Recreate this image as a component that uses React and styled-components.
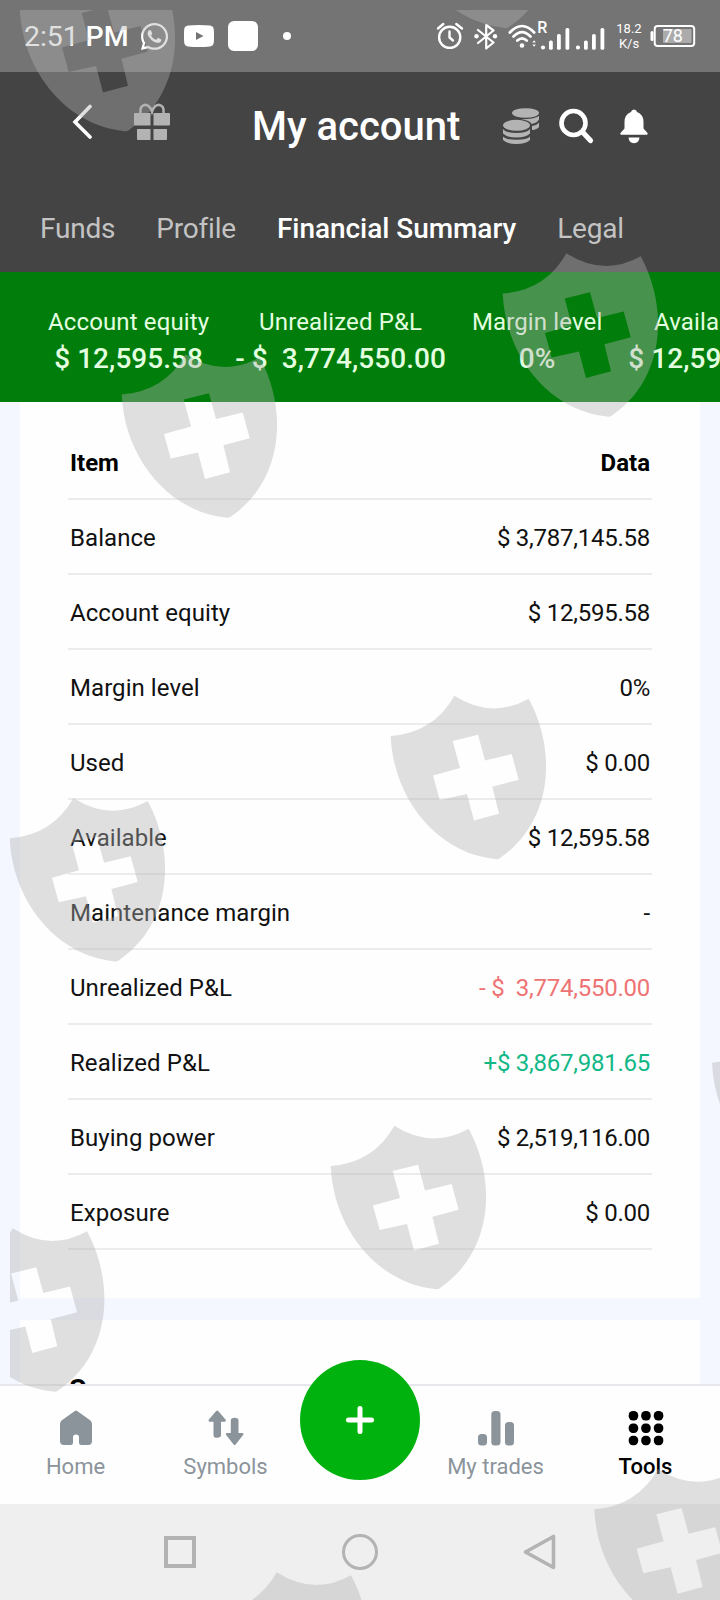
import * as React from 'react'
import styled, { createGlobalStyle } from 'styled-components'
import { FaWhatsapp } from 'react-icons/fa'

const GlobalStyle = createGlobalStyle`
  * {
    box-sizing: border-box;
  }
  body {
    margin: 0;
    background: #fdfdfd;
    font-family: Roboto, "Liberation Sans", sans-serif;
  }
`

const Screen = styled.div`
  position: relative;
  display: flex;
  flex-direction: column;
  width: 720px;
  height: 1600px;
  overflow: hidden;
`

const StatusBar = styled.div`
  display: flex;
  align-items: center;
  justify-content: space-between;
  height: 72px;
  padding: 0 24px 0 24px;
  background: #747474;
  color: #fff;
`

const StatusGroup = styled.div`
  display: flex;
  align-items: center;
`

const Clock = styled.span`
  width: 115px;
  padding-top: 2px;
  font-size: 28.5px;
  font-weight: 500;
  line-height: 34px;
  letter-spacing: -0.1px;
  white-space: nowrap;
`

const ClockDigits = styled.span`
  font-weight: 400;
`

const AppBadge = styled.span`
  width: 30px;
  height: 30px;
  margin-left: 14px;
  border-radius: 6px;
  background: #fff;
`

const Dot = styled.span`
  width: 8px;
  height: 8px;
  margin-left: 25px;
  border-radius: 50%;
  background: #fff;
`

const Speed = styled.span`
  display: flex;
  flex-direction: column;
  align-items: center;
  width: 26px;
  margin: 0 8px 0 11px;
  font-size: 13px;
  font-weight: 400;
  line-height: 15px;
`

const Header = styled.header`
  display: flex;
  flex-direction: column;
  height: 200px;
  background: #444;
`

const TitleRow = styled.div`
  display: flex;
  align-items: center;
  height: 108px;
  padding: 0 71px 0 72px;
`

const HeaderStart = styled.div`
  display: flex;
  align-items: center;
  padding-bottom: 8px;
`

const Title = styled.h1`
  flex: 1;
  margin: 0;
  padding: 2px 0 0 81px;
  color: #fff;
  font-size: 40px;
  font-weight: 500;
  line-height: 48px;
  white-space: nowrap;
`

const HeaderActions = styled.div`
  display: flex;
  align-items: center;
`

const Tabs = styled.nav`
  display: flex;
  align-items: center;
  gap: 41px;
  height: 92px;
  padding: 5px 0 0 40px;
`

const Tab = styled.span`
  color: ${({ $active }) => ($active ? '#fff' : '#c3c3c3')};
  font-size: 28px;
  font-weight: ${({ $active }) => ($active ? 500 : 400)};
  line-height: 34px;
  letter-spacing: ${({ $active }) => ($active ? '-0.05px' : '-0.2px')};
  white-space: nowrap;
`

const Strip = styled.section`
  display: flex;
  gap: 26px;
  height: 130px;
  padding: 32px 0 0 48px;
  overflow: hidden;
  background: #007d0a;
`

const Stat = styled.div`
  display: flex;
  flex: none;
  flex-direction: column;
  align-items: center;
  color: #e4ffe0;
  white-space: pre;
`

const StatLabel = styled.span`
  font-size: 24px;
  line-height: 36px;
  letter-spacing: 0.13px;
`

const StatValue = styled.span`
  font-size: 28px;
  font-weight: 500;
  line-height: 38px;
  letter-spacing: 0.05px;
`

const Content = styled.main`
  display: flex;
  flex: 1;
  flex-direction: column;
  gap: 22px;
  min-height: 0;
  padding: 0 20px;
  overflow: hidden;
  background: #f4f7ff;
`

const Card = styled.section`
  flex: none;
  height: ${({ $height }) => $height}px;
  padding: ${({ $top }) => $top}px 48px 0;
  background: #fefefe;
`

const Row = styled.div`
  display: flex;
  align-items: center;
  justify-content: space-between;
  height: 75px;
  padding: 2px 2px 0;
  border-bottom: 2px solid #ececec;
  color: ${({ $head }) => ($head ? '#000' : '#111')};
  font-size: 24px;
  font-weight: ${({ $head }) => ($head ? 700 : 400)};
  line-height: 30px;
  white-space: pre;
`

const Label = styled.span`
  letter-spacing: 0.06px;
`

const Amount = styled.span`
  color: ${({ $tone }) => ({ loss: '#ee7374', gain: '#12b886' })[$tone] || 'inherit'};
  letter-spacing: -0.25px;
`

const CardTitle = styled.h2`
  margin: 0;
  padding-left: 1px;
  color: #000;
  font-size: 28px;
  font-weight: 700;
  line-height: 34px;
`

const BottomNav = styled.nav`
  display: grid;
  grid-template-columns: 150px 150px 120px 150px 150px;
  height: 120px;
  border-top: 2px solid #e6e8ec;
  background: #fefefe;
`

const NavItem = styled.div`
  display: flex;
  flex-direction: column;
  align-items: center;
  padding: 24px 0 0 1px;
  color: ${({ $active }) => ($active ? '#000' : '#8b949b')};
  font-size: 22px;
  font-weight: ${({ $active }) => ($active ? 500 : 400)};
  line-height: 42px;
  white-space: nowrap;
`

const AddButton = styled.div`
  display: flex;
  align-items: center;
  justify-content: center;
  width: 120px;
  height: 120px;
  margin-top: -26px;
  border-radius: 50%;
  background: #00b20d;
`

const SystemBar = styled.div`
  display: flex;
  justify-content: center;
  gap: 144px;
  height: 96px;
  padding-top: 30px;
  background: #efefef;
`

const Overlay = styled.svg`
  position: absolute;
  inset: 0;
  pointer-events: none;
`

const Icon = styled.svg`
  flex: none;
  margin-left: ${({ $left = 0 }) => $left}px;
  fill: currentColor;
`

const HeaderIcon = styled(Icon)`
  color: ${({ $muted }) => ($muted ? '#b3b3b3' : '#fff')};
`

const stats = [
  { label: 'Account equity', value: '$ 12,595.58' },
  { label: 'Unrealized P&L', value: '- $  3,774,550.00' },
  { label: 'Margin level', value: '0%' },
  { label: 'Available', value: '$ 12,595.58' },
]

const rows = [
  { item: 'Balance', data: '$ 3,787,145.58' },
  { item: 'Account equity', data: '$ 12,595.58' },
  { item: 'Margin level', data: '0%' },
  { item: 'Used', data: '$ 0.00' },
  { item: 'Available', data: '$ 12,595.58' },
  { item: 'Maintenance margin', data: '-' },
  { item: 'Unrealized P&L', data: '- $  3,774,550.00', tone: 'loss' },
  { item: 'Realized P&L', data: '+$ 3,867,981.65', tone: 'gain' },
  { item: 'Buying power', data: '$ 2,519,116.00' },
  { item: 'Exposure', data: '$ 0.00' },
]

const shields = [
  [19.7, -32.3],
  [400, -135.5],
  [121.7, 354.3],
  [502.7, 253.3],
  [390.7, 695.7],
  [9.7, 798],
  [330.7, 1125.7],
  [-51, 1228.3],
  [712, 1022.4],
  [594.3, 1469],
  [213, 1572.3],
]

const SHIELD_PATH =
  'M0 40.3Q43 37 63.7 0Q101 23.8 138 3C164.7 51.7 164.7 124.3 109 162.5Q107 164 104 163.2C47.7 157.7 2.7 104.3 0 40.3Z' +
  'M62 45.3L69.3 72.3L42.3 79.7L49 104.3L76.3 98.3L83.3 124.7L108.3 118L101.7 91L128 84L121 58.3L94.3 64.7L87.3 39Z'

const Shields = () => (
  <Overlay width="720" height="1600" viewBox="0 0 720 1600">
    <clipPath id="shield-area">
      <rect x="10" y="10" width="710" height="1590" />
    </clipPath>
    <g clipPath="url(#shield-area)" fill="#b2b2b2" fillOpacity="0.4" fillRule="evenodd">
      {shields.map(([x, y]) => (
        <path key={`${x}-${y}`} d={SHIELD_PATH} transform={`translate(${x} ${y})`} />
      ))}
    </g>
  </Overlay>
)

const YoutubeIcon = () => (
  <Icon $left={14} width="30" height="22" viewBox="0 0 30 22">
    <path
      fillRule="evenodd"
      d="M4 .6Q15-.5 26 .6Q29.500 1 29.800 4.500Q30.300 11 29.800 17.500Q29.500 21 26 21.400Q15 22.500 4 21.400Q.5 21 .2 17.500Q-.3 11 .2 4.500Q.5 1 4 .6ZM12 7V15L19.500 11Z"
    />
  </Icon>
)

const AlarmIcon = () => (
  <Icon width="28" height="28" viewBox="0 0 28 28">
    <g fill="none" stroke="currentColor" strokeWidth="2.400" strokeLinecap="round">
      <circle cx="13.700" cy="15.300" r="10.600" />
      <path d="M13.500 9.500V15.500L17 18.500M2 6.500L7.300 2M20.300 2L26 6.500" />
    </g>
  </Icon>
)

const BluetoothIcon = () => (
  <Icon $left={10} width="24" height="27" viewBox="0 0 24 27">
    <path
      d="M4 7L19.500 19.500L12.200 25.500V2L19.500 7.500L4 20"
      fill="none"
      stroke="currentColor"
      strokeWidth="2.200"
      strokeLinejoin="round"
      strokeLinecap="round"
    />
    <circle cx="2.500" cy="13.300" r="2.200" />
    <circle cx="21" cy="13.300" r="2.200" />
  </Icon>
)

const WifiIcon = () => (
  <Icon $left={10} width="29" height="26" viewBox="0 0 29 26">
    <g fill="none" stroke="currentColor" strokeWidth="2.700" strokeLinecap="round">
      <path d="M1.800 9.500Q14 -3.500 26.200 9.500M5.500 13.500Q14 5 22.500 13.500M9.300 17.500Q14 13.300 18.700 17.500" />
    </g>
    <circle cx="14" cy="22.500" r="2.300" />
    <path d="M24.300 19.500l1.800-2.200 1.800 2.200zM24.300 21.500l1.800 2.200 1.800-2.200z" />
  </Icon>
)

const SignalIcon = ({ roaming }) => (
  <Icon $left={roaming ? 0 : 6} width={roaming ? 33 : 29} height="30" viewBox={roaming ? '-1 0 33 30' : '3 0 29 30'}>
    {roaming && (
      <text x="-0.800" y="12" fontSize="16" fontWeight="500">
        R
      </text>
    )}
    <circle cx="5" cy="26.500" r="2.100" />
    <rect x="11" y="19.500" width="3.800" height="9.300" rx="1.600" />
    <rect x="19" y="13" width="3.800" height="15.800" rx="1.600" />
    <rect x="27.500" y="7" width="3.800" height="21.800" rx="1.600" />
  </Icon>
)

const BatteryIcon = () => (
  <Icon width="46" height="24" viewBox="0 0 46 24">
    <rect x="0.500" y="7" width="3" height="10" rx="1.500" />
    <rect x="4.700" y="2" width="39.500" height="20" rx="3" fill="none" stroke="currentColor" strokeWidth="2" />
    <rect x="13" y="5" width="28.500" height="14" rx="1" fillOpacity="0.4" />
    <text x="22.800" y="18.300" fontSize="18" textAnchor="middle">
      78
    </text>
  </Icon>
)

const BackIcon = () => (
  <HeaderIcon width="22" height="36" viewBox="0 0 22 36">
    <path d="M18 2.500L3 18L18 33" fill="none" stroke="currentColor" strokeWidth="3.600" strokeLinecap="round" />
  </HeaderIcon>
)

const GiftIcon = () => (
  <HeaderIcon $left={39} $muted width="38" height="38" viewBox="0 0 38 38">
    <path d="M2 10H17.500V22.500H2Q1 22.500 1 21.500V11Q1 10 2 10ZM20.500 10H36Q37 10 37 11V21.500Q37 22.500 36 22.500H20.500ZM4 26H17.500V37H5Q4 37 4 36ZM20.500 26H34V36Q34 37 33 37H20.500Z" />
    <path
      d="M7.500 10C6 0 16 -1 19 8.500C22 -1 32 0 30.500 10"
      fill="none"
      stroke="currentColor"
      strokeWidth="2.600"
    />
  </HeaderIcon>
)

const CoinsIcon = () => (
  <HeaderIcon $muted width="38" height="38" viewBox="0 0 38 38">
    <ellipse cx="23.500" cy="6" rx="13.500" ry="4.800" />
    <path d="M19 12.300Q31 12.500 37 9V12.500Q35 16 29.500 17Q28 13.500 19 12.300ZM30 19Q35 18 37 15.500V20Q35 22.500 30 23Z" />
    <ellipse cx="14.500" cy="18.300" rx="13.500" ry="5.500" />
    <path d="M1 22Q4 26 14.500 26T28 22V26.500Q24 30.500 14.500 30.500T1 26.500ZM1 29.500Q4 32.800 14.500 32.800T28 29.500V33Q24 37 14.500 37T1 33Z" />
  </HeaderIcon>
)

const SearchIcon = () => (
  <HeaderIcon $left={18} width="37" height="38" viewBox="0 0 37 38">
    <circle cx="15.500" cy="16" r="12" fill="none" stroke="currentColor" strokeWidth="4.600" />
    <path d="M24.500 25L32.500 33.500" stroke="currentColor" strokeWidth="5.200" strokeLinecap="round" />
  </HeaderIcon>
)

const BellIcon = () => (
  <HeaderIcon $left={24} width="30" height="36" viewBox="0 0 30 36">
    <path d="M15 1.500Q17.500 1.500 18 4Q24.500 6.500 24.500 14V20.500L28.500 25Q29.300 26.800 27 26.800H3Q.7 26.800 1.500 25L5.500 20.500V14Q5.500 6.500 12 4Q12.500 1.500 15 1.500ZM9.500 29.500H20.500Q20 35.200 15 35.200T9.500 29.500Z" />
  </HeaderIcon>
)

const HomeIcon = () => (
  <Icon width="36" height="36" viewBox="0 0 36 36">
    <path d="M16.500 1.200Q18 0 19.500 1.200L32.500 10.500Q34 12 34 14V31Q34 35 30 35H23.500Q21 35 21 32.500V27Q21 24.500 18 24.500T15 27V32.500Q15 35 12.500 35H6Q2 35 2 31V14Q2 12 3.500 10.500Z" />
  </Icon>
)

const SymbolsIcon = () => (
  <Icon width="36" height="36" viewBox="0 0 36 36">
    <path d="M8.200 1Q9.200 0 10.200 1L17.500 9.500Q18.600 11.700 16.500 11.700H13V25Q13 27.800 9.200 27.800T5.500 25V11.700H2Q-.2 11.700 .9 9.500ZM26.600 7.800Q30.500 7.800 30.500 10.500V23H34Q36.200 23 35.100 25L27.600 34.500Q26.600 35.500 25.600 34.500L18.200 25Q17 23 19.200 23H22.800V10.500Q22.800 7.800 26.600 7.800Z" />
  </Icon>
)

const TradesIcon = () => (
  <Icon width="36" height="36" viewBox="0 0 36 36">
    <rect x="0" y="24" width="9" height="11.500" rx="3.500" />
    <rect x="13.300" y="1" width="9.200" height="34.500" rx="3.500" />
    <rect x="27" y="12" width="9" height="23.500" rx="3.500" />
  </Icon>
)

const ToolsIcon = () => (
  <Icon width="36" height="36" viewBox="0 0 36 36">
    {[1, 13.400, 25.800].map((y) =>
      [0.700, 13.200, 25.800].map((x) => (
        <rect key={`${x}-${y}`} x={x} y={y} width="9.500" height="9.500" rx="4.200" />
      ))
    )}
  </Icon>
)

const App = () => {
  return (
    <Screen>
      <GlobalStyle />
      <StatusBar>
        <StatusGroup>
          <Clock>
            <ClockDigits>2:51</ClockDigits> PM
          </Clock>
          <FaWhatsapp size={31} />
          <YoutubeIcon />
          <AppBadge />
          <Dot />
        </StatusGroup>
        <StatusGroup>
          <AlarmIcon />
          <BluetoothIcon />
          <WifiIcon />
          <SignalIcon roaming />
          <SignalIcon />
          <Speed>
            <span>18.2</span>
            <span>K/s</span>
          </Speed>
          <BatteryIcon />
        </StatusGroup>
      </StatusBar>
      <Header>
        <TitleRow>
          <HeaderStart>
            <BackIcon />
            <GiftIcon />
          </HeaderStart>
          <Title>My account</Title>
          <HeaderActions>
            <CoinsIcon />
            <SearchIcon />
            <BellIcon />
          </HeaderActions>
        </TitleRow>
        <Tabs>
          <Tab>Funds</Tab>
          <Tab>Profile</Tab>
          <Tab $active>Financial Summary</Tab>
          <Tab>Legal</Tab>
        </Tabs>
      </Header>
      <Strip>
        {stats.map((stat) => (
          <Stat key={stat.label}>
            <StatLabel>{stat.label}</StatLabel>
            <StatValue>{stat.value}</StatValue>
          </Stat>
        ))}
      </Strip>
      <Content>
        <Card $height={896} $top={23}>
          <Row $head>
            <span>Item</span>
            <span>Data</span>
          </Row>
          {rows.map((row) => (
            <Row key={row.item}>
              <Label>{row.item}</Label>
              <Amount $tone={row.tone}>{row.data}</Amount>
            </Row>
          ))}
        </Card>
        <Card $height={200} $top={53}>
          <CardTitle>Summary</CardTitle>
        </Card>
      </Content>
      <BottomNav>
        <NavItem>
          <HomeIcon />
          Home
        </NavItem>
        <NavItem>
          <SymbolsIcon />
          Symbols
        </NavItem>
        <AddButton>
          <Icon width="28" height="28" viewBox="0 0 28 28">
            <path d="M14 2.500V25.500M2.500 14H25.500" stroke="#fff" strokeWidth="5" strokeLinecap="round" />
          </Icon>
        </AddButton>
        <NavItem>
          <TradesIcon />
          My trades
        </NavItem>
        <NavItem $active>
          <ToolsIcon />
          Tools
        </NavItem>
      </BottomNav>
      <SystemBar>
        <Icon width="36" height="36" viewBox="0 0 36 36">
          <rect x="4" y="4" width="28" height="28" fill="none" stroke="#b3b3b3" strokeWidth="4" />
        </Icon>
        <Icon width="36" height="36" viewBox="0 0 36 36">
          <circle cx="18" cy="18" r="16.500" fill="none" stroke="#b3b3b3" strokeWidth="3" />
        </Icon>
        <Icon width="36" height="36" viewBox="0 0 36 36">
          <path d="M31.500 2.500V33.500L3.500 18Z" fill="none" stroke="#b3b3b3" strokeWidth="3.600" strokeLinejoin="round" />
        </Icon>
      </SystemBar>
      <Shields />
    </Screen>
  )
}

export default App
